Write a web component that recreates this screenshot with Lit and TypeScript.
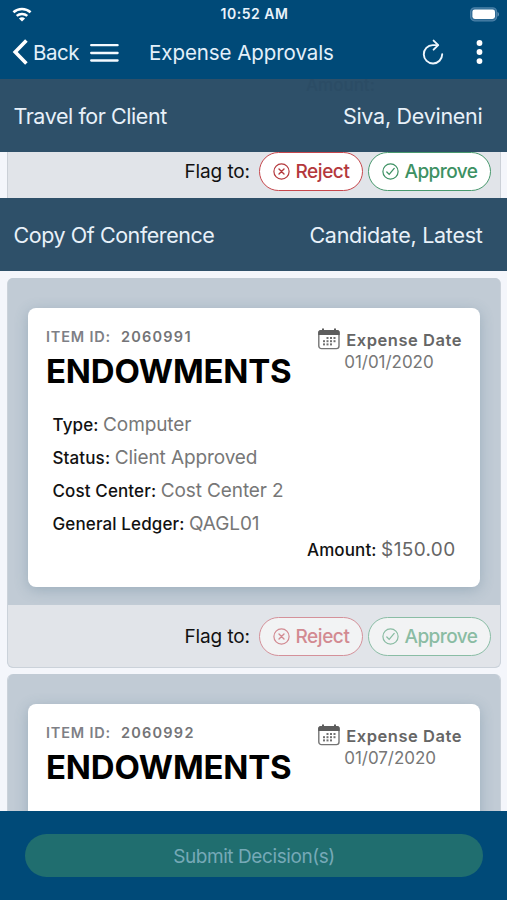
import { LitElement, html, css, svg } from "lit";
import { customElement, property } from "lit/decorators.js";

interface Expense {
  id: string;
  name: string;
  date: string;
  facts: [string, string][];
  amount?: string;
}

const EXPENSES: Expense[] = [
  {
    id: "2060991",
    name: "ENDOWMENTS",
    date: "01/01/2020",
    facts: [
      ["Type:", "Computer"],
      ["Status:", "Client Approved"],
      ["Cost Center:", "Cost Center 2"],
      ["General Ledger:", "QAGL01"],
    ],
    amount: "$150.00",
  },
  { id: "2060992", name: "ENDOWMENTS", date: "01/07/2020", facts: [] },
];

@customElement("status-bar")
class StatusBar extends LitElement {
  static styles = css`
    :host { display: grid; grid-template-columns: 1fr auto 1fr; align-items: center; height: 26px; padding: 0 8px 0 12px; color: #e9f3fb; }
    .time { font-size: 14px; font-weight: 600; letter-spacing: 0.5px; line-height: 28px; margin: 0 1px 0 -1px; }
    .battery { justify-self: end; }
    svg { display: block; }
  `;
  render() {
    return html`
      <svg width="20" height="15" viewBox="0 0 20 15" fill="none" stroke="#fff" stroke-width="2.5">
        <path d="M1.4 5.3C6.3.9 13.7.9 18.6 5.3" />
        <path d="M4.7 8.9c3-2.7 7.6-2.7 10.6 0" />
        <path d="M10 14.6 6.9 11.5c1.7-1.6 4.5-1.6 6.2 0z" fill="#fff" stroke="none" />
      </svg>
      <span class="time">10:52 AM</span>
      <svg class="battery" width="30" height="15" viewBox="0 0 30 15">
        <rect x="1.6" y=".8" width="26" height="13" rx="4" fill="#2d6a95" stroke="#4b81a8" stroke-width="1.2" />
        <rect x="3.4" y="2.4" width="22.6" height="9.6" rx="2.4" fill="#fff" />
        <path d="M28.6 5v4.6c1.6-.7 1.6-3.9 0-4.6z" fill="#7ba4c2" />
      </svg>
    `;
  }
}

@customElement("nav-bar")
class NavBar extends LitElement {
  static styles = css`
    :host { display: flex; align-items: center; height: 52px; padding: 0 24.5px 0 12px; color: #e3f0fa; }
    svg { display: block; flex: none; }
    .back { margin-left: 5px; width: 46px; font-size: 20.5px; letter-spacing: -0.5px; white-space: nowrap; }
    .menu { margin-left: 11px; }
    .title { margin-left: 30px; font-size: 20.5px; letter-spacing: -0.06px; white-space: nowrap; }
    .back, .title { line-height: 52px; padding-top: 1px; }
    .reload { margin-left: auto; margin-right: 32px; }
  `;
  render() {
    return html`
      <svg width="16" height="26" viewBox="0 0 16 26" fill="none" stroke="#fff" stroke-width="3.6"><path d="M14.4 1.5 3.2 13l11.2 11.5" /></svg>
      <span class="back">Back</span>
      <svg class="menu" width="29" height="20" viewBox="0 0 29 20" stroke="#f4faff" stroke-width="2.3" stroke-linecap="round"><path d="M1.2 3.2h26.4M1.2 11h26.4M1.2 18.5h26.4" /></svg>
      <span class="title">Expense Approvals</span>
      <svg class="reload" width="22" height="26" viewBox="0 0 22 26" fill="none" stroke="#edf6fd" stroke-width="1.9" stroke-linecap="round" stroke-linejoin="round">
        <path d="M15.6 6.1h-4.9a9.2 9.2 0 1 0 9.5 9.2" /><path d="m11.6 1.6 4.6 4.5-4.6 4.6" />
      </svg>
      <svg width="7" height="26" viewBox="0 0 7 26" fill="#fff"><circle cx="3.5" cy="4" r="2.9" /><circle cx="3.5" cy="13" r="2.9" /><circle cx="3.5" cy="22.1" r="2.9" /></svg>
    `;
  }
}

@customElement("group-heading")
class GroupHeading extends LitElement {
  @property() label = "";
  @property() person = "";
  @property() beneath = "";
  static styles = css`
    :host { position: relative; display: flex; flex: none; justify-content: space-between; align-items: center; box-sizing: border-box; height: 73px; padding: 1px 24.5px 0 13.5px; background: #2e5069; color: #e8f1f9; font-size: 21.5px; letter-spacing: -0.44px; overflow: hidden; white-space: nowrap; }
    .person { letter-spacing: -0.27px; }
    .beneath { position: absolute; left: 306px; top: -4px; font-size: 17px; font-weight: 500; line-height: 20px; color: #2b4c65; letter-spacing: 0; }
  `;
  render() {
    return html`${this.beneath ? html`<span class="beneath">${this.beneath}</span>` : null}<span>${this.label}</span><span class="person">${this.person}</span>`;
  }
}

@customElement("flag-row")
class FlagRow extends LitElement {
  @property({ type: Boolean }) faded = false;
  static styles = css`
    :host { display: flex; justify-content: flex-end; align-items: center; box-sizing: border-box; height: 62px; padding-right: 9px; background: #e1e4e9; font-size: 19px; color: #111; }
    .label { margin-right: 9px; letter-spacing: -0.1px; }
    .pill { display: flex; align-items: center; box-sizing: border-box; height: 39px; border: 1.5px solid; border-radius: 20px; background: #fff; letter-spacing: -0.45px; font-weight: 500; line-height: 24px; white-space: nowrap; }
    .word { padding-top: 2px; }
    .reject { width: 104px; padding-left: 13px; margin-right: 5px; color: #b4383c; border-color: #c6474c; }
    .approve { width: 123px; padding-left: 13px; color: #3d9163; border-color: #49996e; letter-spacing: -0.55px; }
    .faded { background: #f2f3f4; }
    .faded.reject { color: #d28a91; border-color: #d4919a; }
    .faded.approve { color: #8abca3; border-color: #8abda5; }
    svg { display: block; flex: none; margin: 1px 5.5px 0 0; }
  `;
  render() {
    const f = this.faded ? "faded" : "";
    const icon = (mark: unknown) => html`<svg width="17" height="17" viewBox="0 0 17 17" fill="none" stroke="currentColor" stroke-width="1.2" stroke-linecap="round"><circle cx="8.5" cy="8.5" r="7.6" />${mark}</svg>`;
    return html`
      <span class="label">Flag to:</span>
      <span class="pill reject ${f}">${icon(svg`<path d="m6 6 5 5M11 6l-5 5" stroke-width="1.4" />`)}<span class="word">Reject</span></span>
      <span class="pill approve ${f}">${icon(svg`<path d="m4.8 9 2.4 2.4 5-6" stroke-width="1.3" />`)}<span class="word">Approve</span></span>
    `;
  }
}

@customElement("expense-card")
class ExpenseCard extends LitElement {
  @property({ attribute: false }) item!: Expense;
  @property({ type: Boolean }) flaggable = false;
  static styles = css`
    :host { display: block; flex: none; box-sizing: border-box; width: 494px; margin: 0 6px 6px 7px; border: 1px solid #cbd2da; border-top: 0; border-radius: 6px; overflow: hidden; background: #c0cad4; }
    .body { padding: 30px 20px 18px; background: #c1cbd5; }
    .sheet { display: flex; flex-direction: column; box-sizing: border-box; height: 279px; padding: 18px 18px 0; border-radius: 8px; background: #fff; box-shadow: 0 3px 14px rgba(70, 105, 130, 0.3); white-space: nowrap; }
    .top { display: flex; justify-content: space-between; }
    .id { display: flex; gap: 10px; font-size: 14.5px; font-weight: 600; line-height: 21px; height: 20px; color: #7e7f86; letter-spacing: 0.8px; }
    .number { color: #747477; letter-spacing: 1.25px; }
    .name { font-size: 33px; font-weight: 700; line-height: 40px; margin-top: 5px; color: #000; letter-spacing: -0.2px; }
    .when { display: grid; grid-template-columns: 22px auto; column-gap: 6px; align-content: start; padding-top: 2px; }
    .when-label { font-size: 16.5px; font-weight: 600; line-height: 24px; color: #666; letter-spacing: 0.54px; }
    .when-date { grid-column: 2; margin-left: -2px; font-size: 17px; line-height: 21px; color: #777; letter-spacing: -0.03px; }
    .facts { margin-top: 17px; padding-left: 6.5px; }
    .fact { display: flex; align-items: baseline; gap: 4.5px; height: 33px; line-height: 33px; font-size: 17px; font-weight: 500; color: #111; letter-spacing: 0.12px; }
    .value { font-size: 19px; font-weight: 400; color: #777; letter-spacing: -0.1px; }
    .total { justify-content: flex-end; margin-top: -7px; padding-right: 6.5px; }
    .total .value { color: #666; letter-spacing: 0.35px; }
    svg { display: block; }
  `;
  render() {
    const e = this.item;
    const dots = [[9.5, 10], [13, 10], [16.5, 10], [6, 13.2], [9.5, 13.2], [13, 13.2], [16.5, 13.2], [6, 16.4], [9.5, 16.4], [13, 16.4]];
    return html`
      <div class="body">
        <div class="sheet">
          <div class="top">
            <div>
              <div class="id"><span>ITEM ID:</span><span class="number">${e.id}</span></div>
              <div class="name">${e.name}</div>
            </div>
            <div class="when">
              <svg width="22" height="22" viewBox="0 0 22 22">
                <rect x=".8" y="2.6" width="20.2" height="18" rx="2.6" fill="#fff" stroke="#747474" stroke-width="1.4" />
                <path d="M.2 7V4.6Q.2 2 2.8 2h16.4q2.5 0 2.5 2.6V7z" fill="#5d5d5d" />
                <path d="M5 .4v3M17 .4v3" stroke="#5d5d5d" stroke-width="2" />
                ${dots.map(([x, y]) => svg`<rect x=${x - 1} y=${y - 1} width="2" height="2" fill="#707070" />`)}
              </svg>
              <span class="when-label">Expense Date</span>
              <span class="when-date">${e.date}</span>
            </div>
          </div>
          <div class="facts">
            ${e.facts.map(([k, v]) => html`<div class="fact"><span>${k}</span><span class="value">${v}</span></div>`)}
          </div>
          ${e.amount ? html`<div class="fact total"><span>Amount:</span><span class="value">${e.amount}</span></div>` : null}
        </div>
      </div>
      ${this.flaggable ? html`<flag-row faded></flag-row>` : null}
    `;
  }
}

@customElement("app-root")
class AppRoot extends LitElement {
  static styles = css`
    :host { display: flex; flex-direction: column; width: 507px; height: 900px; overflow: hidden; background: #f4f6fb; font-family: Inter, "Liberation Sans", sans-serif; }
    .header { flex: none; height: 79px; background: #004a78; }
    .tail { flex: none; height: 46px; overflow: hidden; }
    .tail-card { margin: -12px 6px 0 7px; border: solid #cbd0d7; border-width: 0 1px; }
    .list { flex: 1; min-height: 0; overflow: hidden; display: flex; flex-direction: column; padding-top: 7px; }
    .footer { flex: none; box-sizing: border-box; height: 89px; padding: 23px 24px 0 25px; background: #004a78; }
    .submit { display: block; width: 100%; height: 43px; padding: 2px 0 0; border: 0; border-radius: 22px; background: #206e6f; color: #76a9b7; font: 400 19px Inter, "Liberation Sans", sans-serif; letter-spacing: -0.42px; }
  `;
  render() {
    return html`
      <div class="header"><status-bar></status-bar><nav-bar></nav-bar></div>
      <group-heading label="Travel for Client" person="Siva, Devineni" beneath="Amount:"></group-heading>
      <div class="tail"><div class="tail-card"><flag-row></flag-row></div></div>
      <group-heading label="Copy Of Conference" person="Candidate, Latest"></group-heading>
      <div class="list">${EXPENSES.map((item) => html`<expense-card .item=${item} ?flaggable=${!!item.amount}></expense-card>`)}</div>
      <div class="footer"><button class="submit">Submit Decision(s)</button></div>
    `;
  }
}
